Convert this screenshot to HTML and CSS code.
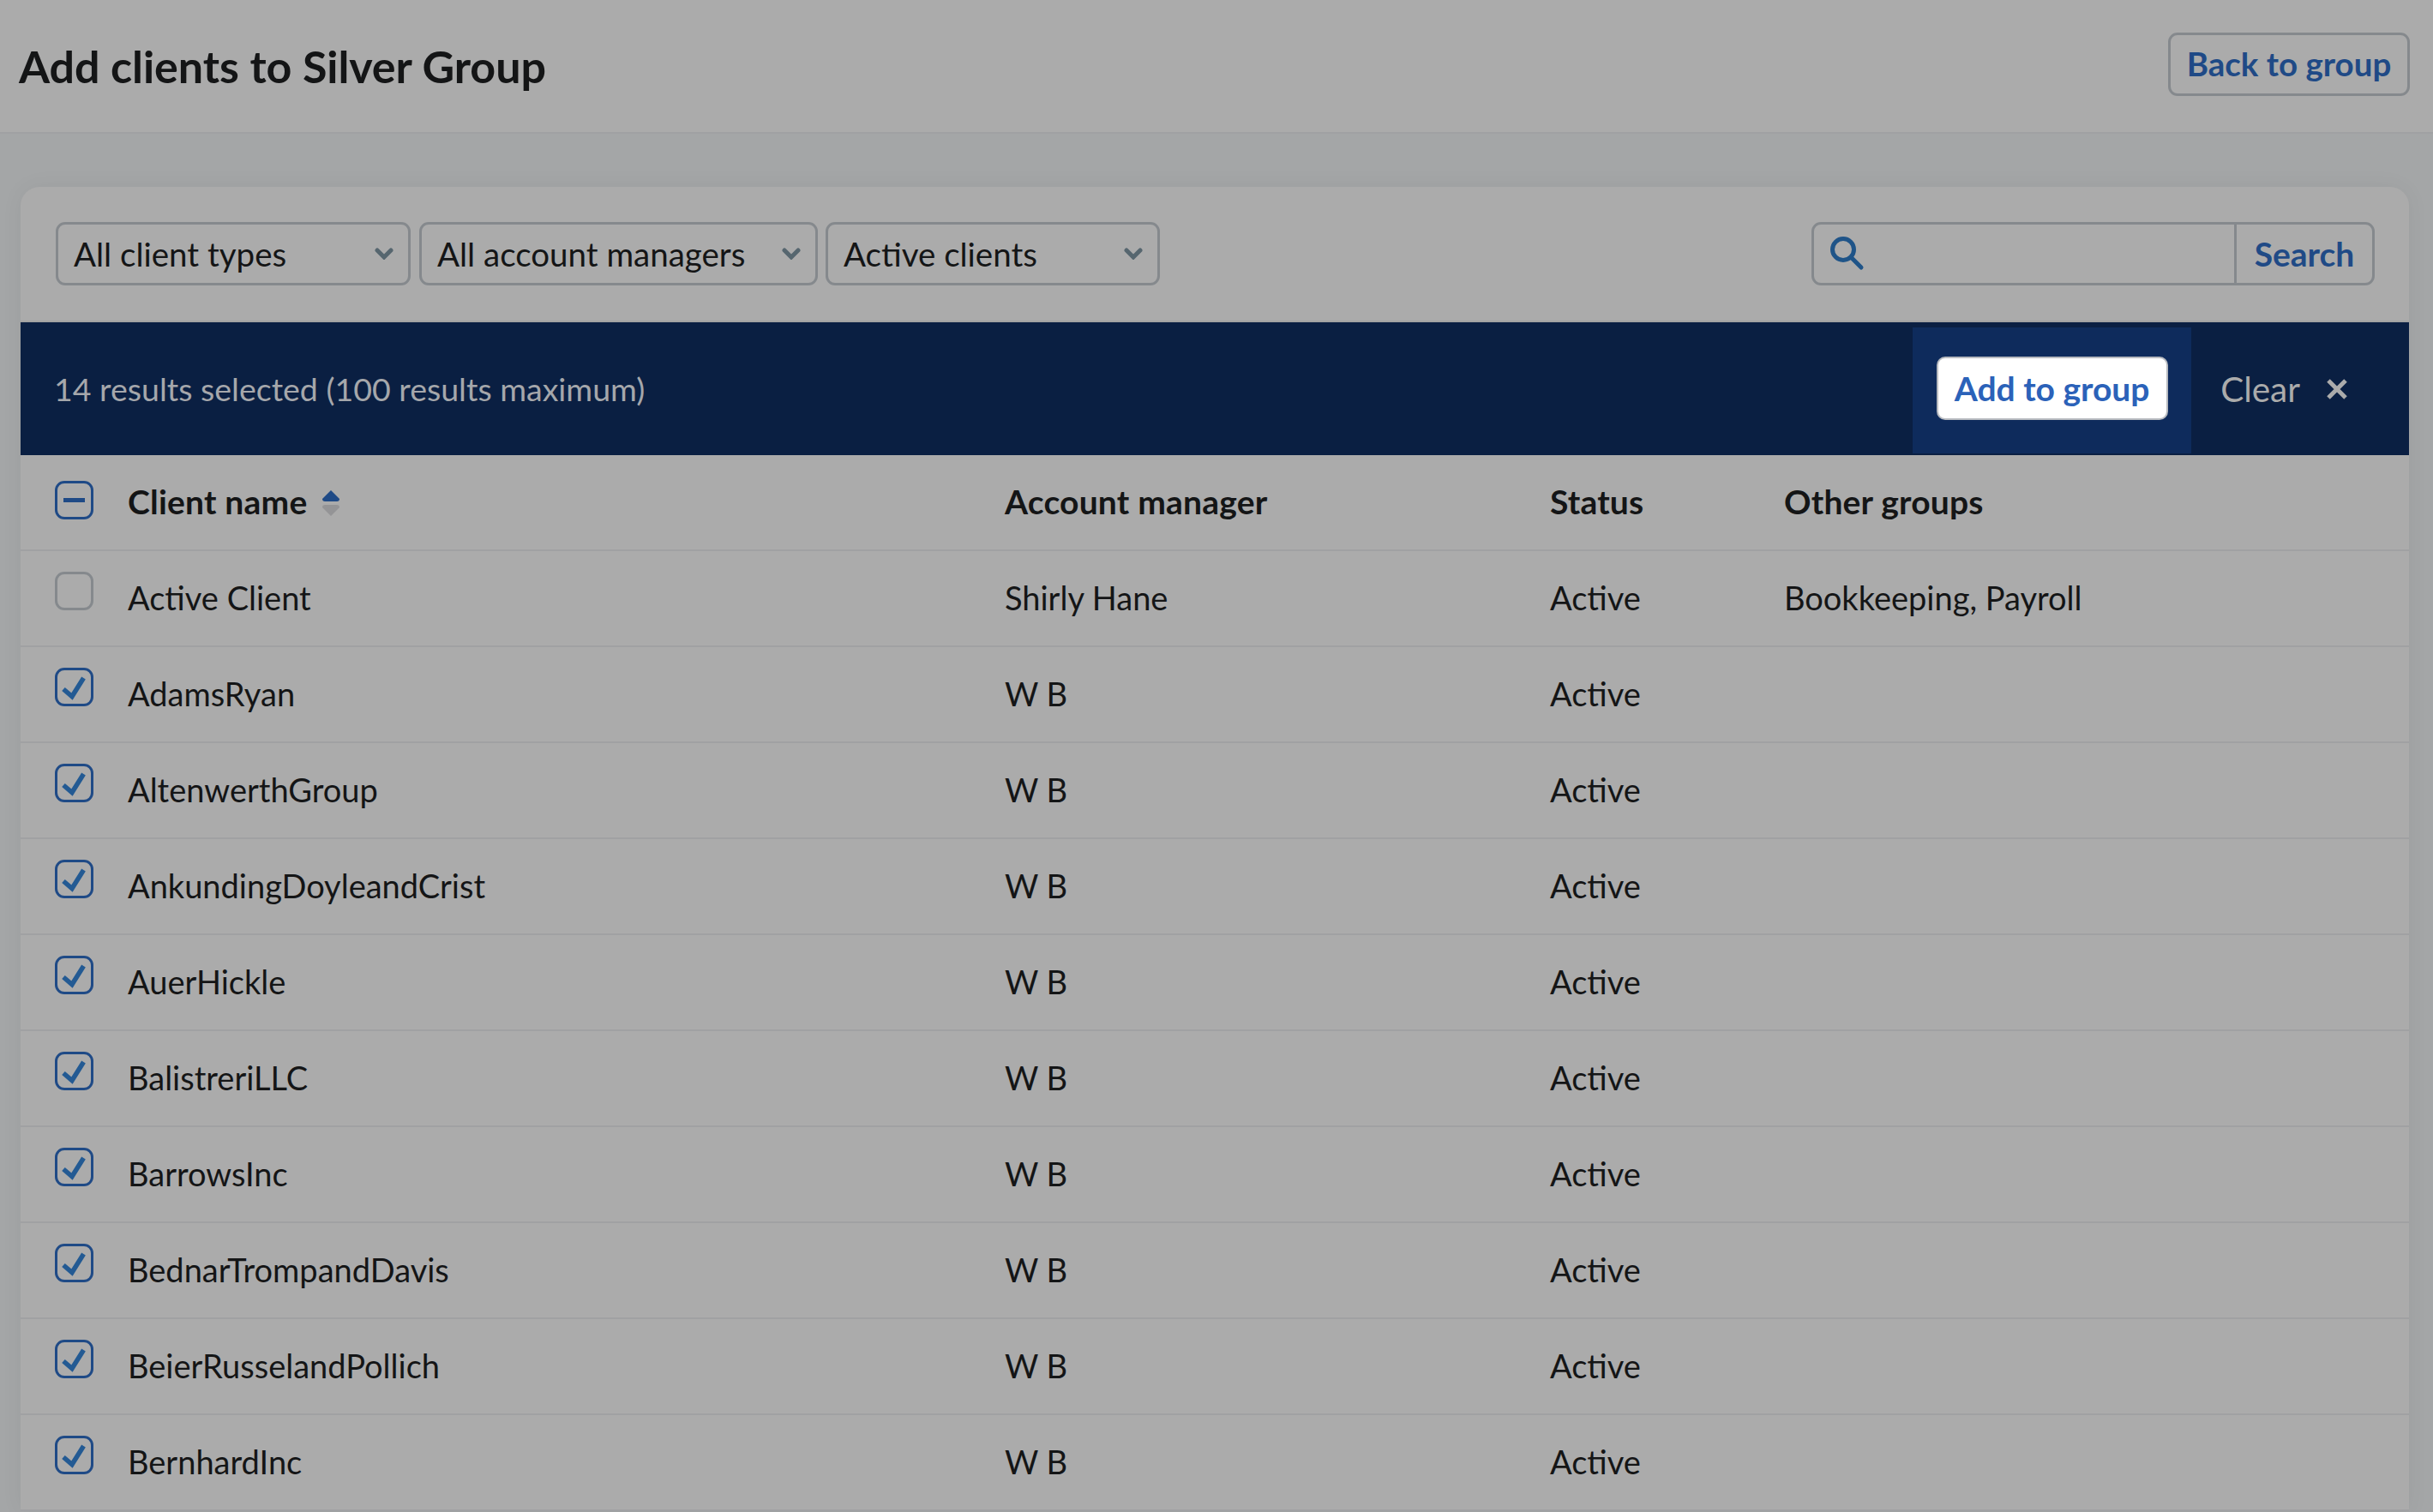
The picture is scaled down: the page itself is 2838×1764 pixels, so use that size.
FILE: index.html
```html
<!DOCTYPE html>
<html lang="en">
<head>
  <meta charset="UTF-8" />
  <title>Add clients to Silver Group</title>
  <link rel="stylesheet" href="styles.css">
</head>
<body>
  <header class="page-header">
    <h1>Add clients to Silver Group</h1>
    <button class="btn-outline">Back to group</button>
  </header>

  <div class="card">
    <div class="toolbar">
      <div class="filters">
        <div class="select select-type">All client types
          <svg width="22" height="14" viewBox="0 0 22 14"><path d="M3 3l8 8 8-8" fill="none" stroke="#56666f" stroke-width="5" stroke-linecap="round"/></svg>
        </div>
        <div class="select select-manager">All account managers
          <svg width="22" height="14" viewBox="0 0 22 14"><path d="M3 3l8 8 8-8" fill="none" stroke="#56666f" stroke-width="5" stroke-linecap="round"/></svg>
        </div>
        <div class="select select-status">Active clients
          <svg width="22" height="14" viewBox="0 0 22 14"><path d="M3 3l8 8 8-8" fill="none" stroke="#56666f" stroke-width="5" stroke-linecap="round"/></svg>
        </div>
      </div>
      <div class="search">
        <div class="search-field">
          <svg width="42" height="42" viewBox="0 0 42 42"><circle cx="16" cy="16" r="12.5" fill="none" stroke="#1f5488" stroke-width="5"/><path d="M25 25l12 12" stroke="#1f5488" stroke-width="5" stroke-linecap="round"/></svg>
        </div>
        <button class="search-btn">Search</button>
      </div>
    </div>

    <div class="selection-bar">
      <span class="selection-text">14 results selected (100 results maximum)</span>
      <div class="selection-action">
        <button class="btn-white">Add to group</button>
      </div>
      <div class="selection-clear">Clear
        <svg width="26" height="26" viewBox="0 0 26 26"><path d="M3 3l20 20M23 3L3 23" stroke="#ababab" stroke-width="5"/></svg>
      </div>
    </div>

    <table class="clients">
      <thead>
        <tr>
          <th class="col-check"><span class="check check-on"><svg width="39" height="39" viewBox="0 0 39 39"><path d="M7 19.5h25" stroke="#1f4a86" stroke-width="5"/></svg></span></th>
          <th class="col-name">Client name
            <svg class="sort" width="20" height="30" viewBox="0 0 20 30"><path d="M10 0L20 10q0 3-3 3H3q-3 0-3-3z" fill="#1f4a86"/><path d="M10 30L20 20q0-3-3-3H3q-3 0-3 3z" fill="#949496"/></svg>
          </th>
          <th class="col-manager">Account manager</th>
          <th class="col-status">Status</th>
          <th>Other groups</th>
        </tr>
      </thead>
      <tbody>
        <tr>
          <td class="col-check"><span class="check"></span></td>
          <td>Active Client</td>
          <td>Shirly Hane</td>
          <td>Active</td>
          <td>Bookkeeping, Payroll</td>
        </tr>
        <tr>
          <td class="col-check"><span class="check check-on"><svg width="39" height="39" viewBox="0 0 39 39"><path d="M7 22l10 8.5L30.5 9" fill="none" stroke="#235a93" stroke-width="5.5"/></svg></span></td>
          <td>AdamsRyan</td><td>W B</td><td>Active</td><td></td>
        </tr>
        <tr>
          <td class="col-check"><span class="check check-on"><svg width="39" height="39" viewBox="0 0 39 39"><path d="M7 22l10 8.5L30.5 9" fill="none" stroke="#235a93" stroke-width="5.5"/></svg></span></td>
          <td>AltenwerthGroup</td><td>W B</td><td>Active</td><td></td>
        </tr>
        <tr>
          <td class="col-check"><span class="check check-on"><svg width="39" height="39" viewBox="0 0 39 39"><path d="M7 22l10 8.5L30.5 9" fill="none" stroke="#235a93" stroke-width="5.5"/></svg></span></td>
          <td>AnkundingDoyleandCrist</td><td>W B</td><td>Active</td><td></td>
        </tr>
        <tr>
          <td class="col-check"><span class="check check-on"><svg width="39" height="39" viewBox="0 0 39 39"><path d="M7 22l10 8.5L30.5 9" fill="none" stroke="#235a93" stroke-width="5.5"/></svg></span></td>
          <td>AuerHickle</td><td>W B</td><td>Active</td><td></td>
        </tr>
        <tr>
          <td class="col-check"><span class="check check-on"><svg width="39" height="39" viewBox="0 0 39 39"><path d="M7 22l10 8.5L30.5 9" fill="none" stroke="#235a93" stroke-width="5.5"/></svg></span></td>
          <td>BalistreriLLC</td><td>W B</td><td>Active</td><td></td>
        </tr>
        <tr>
          <td class="col-check"><span class="check check-on"><svg width="39" height="39" viewBox="0 0 39 39"><path d="M7 22l10 8.5L30.5 9" fill="none" stroke="#235a93" stroke-width="5.5"/></svg></span></td>
          <td>BarrowsInc</td><td>W B</td><td>Active</td><td></td>
        </tr>
        <tr>
          <td class="col-check"><span class="check check-on"><svg width="39" height="39" viewBox="0 0 39 39"><path d="M7 22l10 8.5L30.5 9" fill="none" stroke="#235a93" stroke-width="5.5"/></svg></span></td>
          <td>BednarTrompandDavis</td><td>W B</td><td>Active</td><td></td>
        </tr>
        <tr>
          <td class="col-check"><span class="check check-on"><svg width="39" height="39" viewBox="0 0 39 39"><path d="M7 22l10 8.5L30.5 9" fill="none" stroke="#235a93" stroke-width="5.5"/></svg></span></td>
          <td>BeierRusselandPollich</td><td>W B</td><td>Active</td><td></td>
        </tr>
        <tr>
          <td class="col-check"><span class="check check-on"><svg width="39" height="39" viewBox="0 0 39 39"><path d="M7 22l10 8.5L30.5 9" fill="none" stroke="#235a93" stroke-width="5.5"/></svg></span></td>
          <td>BernhardInc</td><td>W B</td><td>Active</td><td></td>
        </tr>
      </tbody>
    </table>
  </div>
</body>
</html>
```

FILE: styles.css
```css
body {
  font-family: Lato, sans-serif;
  margin: 0;
  height: 1764px;
  overflow: hidden;
  background-color: #a4a6a7;
  color: #141516;
}
button {
  font-family: inherit;
  cursor: pointer;
}

/* Page header */
.page-header {
  display: flex;
  justify-content: space-between;
  align-items: center;
  height: 154px;
  padding: 0 27px 0 22px;
  background-color: #ababab;
  border-bottom: 2px solid #a0a1a3;
}
.page-header h1 {
  margin: 0;
  font-size: 52px;
  font-weight: 700;
  letter-spacing: -0.05px;
}
.btn-outline {
  width: 282px;
  height: 74px;
  margin-top: -4px;
  background: none;
  border: 3px solid #85898d;
  border-radius: 11px;
  color: #1f4a86;
  font-size: 38.5px;
  font-weight: 700;
  padding: 0 0 3px;
}

/* Card */
.card {
  margin: 62px 28px 0 24px;
  background-color: #ababab;
  border-radius: 22px 22px 0 0;
  box-shadow: 0 0 26px rgba(0, 0, 0, 0.05);
}
.toolbar {
  display: flex;
  justify-content: space-between;
  align-items: flex-start;
  height: 158px;
  box-sizing: border-box;
  padding: 41px 40px 0 41px;
  border-bottom: 2px solid #a2a2a2;
}
.filters {
  display: flex;
  gap: 10px;
}
.select {
  display: flex;
  justify-content: space-between;
  align-items: center;
  box-sizing: border-box;
  height: 74px;
  padding: 0 17px 1px 18px;
  border: 3px solid #85898d;
  border-radius: 11px;
  font-size: 38.5px;
}
.select-type { width: 414px; }
.select-manager { width: 465px; }
.select-status {
  width: 390px;
  margin-left: -1px;
}

.search {
  display: flex;
  box-sizing: border-box;
  width: 657px;
  height: 74px;
  border: 3px solid #85898d;
  border-radius: 11px;
}
.search-field {
  flex: 1;
  display: flex;
  align-items: center;
  padding: 0 0 0 18px;
  border-right: 3px solid #85898d;
}
.search-btn {
  width: 158px;
  padding: 0 0 1px;
  background: none;
  border: none;
  color: #1f4a86;
  font-size: 39px;
  font-weight: 700;
}

/* Selection bar */
.selection-bar {
  display: flex;
  align-items: center;
  height: 155px;
  background-color: #0a1f42;
}
.selection-text {
  flex: 1;
  padding-left: 39px;
  font-size: 37.5px;
  color: #a5a7ab;
}
.selection-action {
  display: flex;
  align-items: center;
  justify-content: center;
  width: 325px;
  height: 147px;
  margin-top: 4px;
  background-color: #0e2b5c;
}
.btn-white {
  width: 270px;
  height: 74px;
  margin-top: -5px;
  padding: 0;
  background-color: #fff;
  border: 2px solid #b8bbc0;
  border-radius: 10px;
  color: #2b62b9;
  font-size: 39px;
  font-weight: 700;
}
.selection-clear {
  display: flex;
  align-items: center;
  gap: 30px;
  padding: 0 71px 0 34px;
  font-size: 40.5px;
  color: #ababab;
}

/* Table */
.clients {
  width: 100%;
  border-collapse: collapse;
  table-layout: fixed;
  font-size: 38px;
}
.clients th, .clients td {
  height: 108px;
  padding: 0 0 2px;
  text-align: left;
  vertical-align: middle;
  border-bottom: 2px solid #a0a1a3;
}
.clients th {
  font-size: 39px;
  font-weight: 700;
  letter-spacing: 0.2px;
}
.col-check { width: 125px; }
.col-name { width: 1023px; }
.col-manager { width: 636px; }
.col-status { width: 273px; }
.clients .col-check {
  padding: 0 0 18px 40px;
  box-sizing: border-box;
  height: 110px;
}
.clients th.col-check {
  padding-bottom: 6px;
}
.check {
  display: block;
  box-sizing: border-box;
  width: 45px;
  height: 45px;
  border: 3px solid #85898d;
  border-radius: 11px;
}
.check svg {
  display: block;
}
.check-on {
  border-color: #1f4a86;
}
.sort {
  margin-left: 8px;
  vertical-align: -2px;
}
```
